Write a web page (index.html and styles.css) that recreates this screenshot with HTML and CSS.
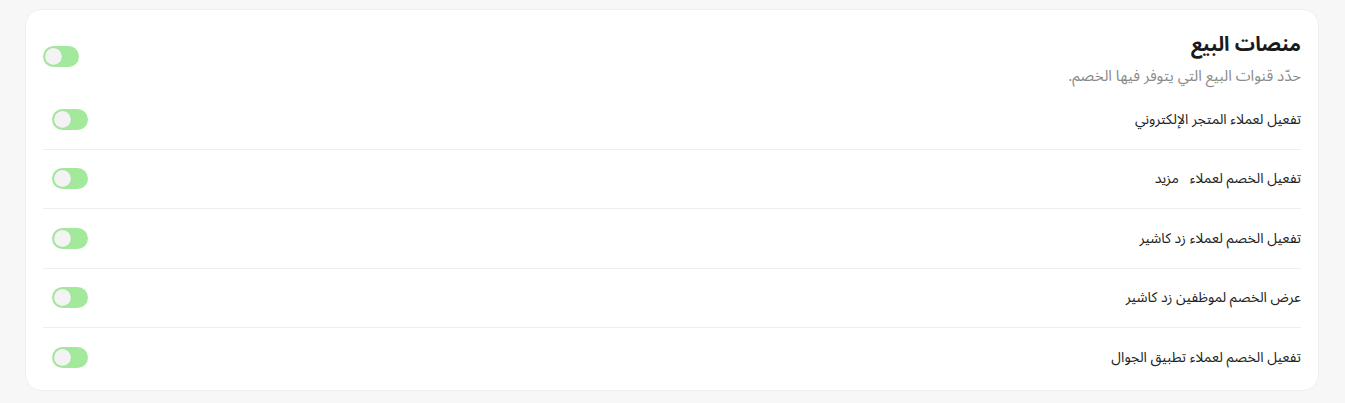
FILE: index.html
```html
<!DOCTYPE html>
<html lang="ar" dir="rtl">
<head>
<meta charset="utf-8">
<link rel="stylesheet" href="styles.css">
</head>
<body>
<section class="card">
  <header class="card-head">
    <div class="head-text">
      <h2 class="title">منصات البيع</h2>
      <p class="subtitle">حدّد قنوات البيع التي يتوفر فيها الخصم.</p>
    </div>
    <span class="toggle head-toggle"><span class="knob"></span></span>
  </header>
  <ul class="rows">
    <li class="row"><span class="label">تفعيل لعملاء المتجر الإلكتروني</span><span class="toggle"><span class="knob"></span></span></li>
    <li class="row"><span class="label">تفعيل الخصم لعملاء&nbsp;&nbsp; مزيد</span><span class="toggle"><span class="knob"></span></span></li>
    <li class="row"><span class="label">تفعيل الخصم لعملاء زد كاشير</span><span class="toggle"><span class="knob"></span></span></li>
    <li class="row"><span class="label">عرض الخصم لموظفين زد كاشير</span><span class="toggle"><span class="knob"></span></span></li>
    <li class="row"><span class="label">تفعيل الخصم لعملاء تطبيق الجوال</span><span class="toggle"><span class="knob"></span></span></li>
  </ul>
</section>
</body>
</html>
```
FILE: styles.css
```css
* { box-sizing: border-box; }
html, body { margin: 0; padding: 0; }
body {
  background: #f7f7f7;
  padding: 9px 26px 0 25px;
  font-family: "Noto Sans Arabic", "DejaVu Sans", sans-serif;
  color: #1f1f1f;
}
.card {
  background: #fff;
  border: 1px solid #efefef;
  border-radius: 16px;
  padding: 21px 17px 2px;
}
.card-head {
  display: flex;
  justify-content: space-between;
  align-items: flex-start;
}
.title {
  margin: 0;
  font-size: 20px;
  line-height: 28px;
  font-weight: 700;
  color: #1a1a1a;
}
.subtitle {
  margin: 7px 0 0;
  font-size: 15px;
  line-height: 20px;
  color: #8a8a8a;
}
.head-toggle { margin-top: 15px; }
.rows {
  list-style: none;
  margin: 4px 0 0;
  padding: 0;
}
.row {
  display: flex;
  justify-content: space-between;
  align-items: center;
  height: 59.5px;
  border-bottom: 1px solid #efefef;
  padding-left: 9px;
}
.row:last-child { border-bottom: none; }
.label {
  font-size: 14px;
  color: #222;
}
.toggle {
  direction: ltr;
  display: flex;
  align-items: center;
  width: 36px;
  height: 21px;
  border-radius: 11px;
  background: #a3e99b;
  padding: 0 2px;
  flex-shrink: 0;
}
.knob {
  width: 17px;
  height: 17px;
  border-radius: 50%;
  background: #f3f3f3;
  box-shadow: 0 0 1px rgba(0,0,0,0.15);
}
```
